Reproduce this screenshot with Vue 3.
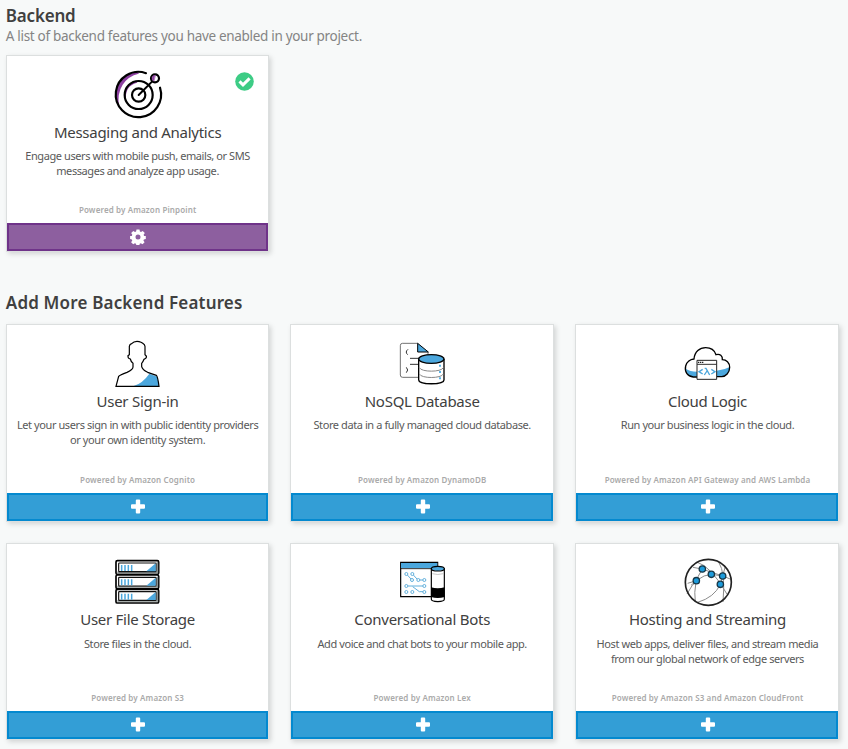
<script setup>
const enabled = [
  { icon: 'target', title: 'Messaging and Analytics', lines: ['Engage users with mobile push, emails, or SMS', 'messages and analyze app usage.'], service: 'Amazon Pinpoint' },
]
const available = [
  { icon: 'user', title: 'User Sign-in', lines: ['Let your users sign in with public identity providers', 'or your own identity system.'], service: 'Amazon Cognito' },
  { icon: 'database', title: 'NoSQL Database', lines: ['Store data in a fully managed cloud database.'], service: 'Amazon DynamoDB' },
  { icon: 'cloud', title: 'Cloud Logic', lines: ['Run your business logic in the cloud.'], service: 'Amazon API Gateway and AWS Lambda' },
  { icon: 'storage', title: 'User File Storage', lines: ['Store files in the cloud.'], service: 'Amazon S3' },
  { icon: 'bots', title: 'Conversational Bots', lines: ['Add voice and chat bots to your mobile app.'], service: 'Amazon Lex' },
  { icon: 'globe', title: 'Hosting and Streaming', lines: ['Host web apps, deliver files, and stream media', 'from our global network of edge servers'], service: 'Amazon S3 and Amazon CloudFront' },
]
const sections = [
  { key: 'on', items: enabled, active: true },
  { key: 'more', items: available, active: false },
]
</script>

<template>
  <main class="page">
    <section v-for="s in sections" :key="s.key" class="section" :class="s.key">
      <header class="head">
        <h2>{{ s.active ? 'Backend' : 'Add More Backend Features' }}</h2>
        <p v-if="s.active">A list of backend features you have enabled in your project.</p>
      </header>
      <div class="grid">
        <article v-for="f in s.items" :key="f.title" class="card" :class="{ active: s.active }">
          <svg v-if="s.active" class="check" viewBox="0 0 19 19">
            <circle cx="9.5" cy="9.5" r="9.3" fill="#3dcc85" />
            <path d="M4.5 9.4 8 12.9 14.6 6.4" fill="none" stroke="#fff" stroke-width="3" />
          </svg>
          <svg class="icon" viewBox="0 0 186 180" fill="none" stroke="#000">
            <g v-if="f.icon === 'target'" stroke-width="6.500" stroke-linecap="round">
              <path d="M95 25A68 68 0 0 0 36 127Q30 88 47 62T95 29Z" fill="#8c3fa0" stroke="none" />
              <path d="M90 51A42 42 0 0 0 57 110Q52 66 90 56Z" fill="#8c3fa0" stroke="none" />
              <path d="M117 27.500A68 68 0 1 0 159 71" />
              <circle cx="95" cy="93" r="42" />
              <circle cx="95" cy="93" r="20" />
              <path d="M95 93 135 53" stroke-width="6" />
              <circle cx="144" cy="43" r="12" fill="#fff" />
              <path d="M144 34A9 9 0 0 0 140 51Z" fill="#8c3fa0" stroke="#8c3fa0" stroke-width="2" />
            </g>
            <g v-else-if="f.icon === 'user'" stroke-width="3.600">
              <path d="M80 156Q108 147 127 119L151 128 156 156Z" fill="#4ba7dd" stroke="none" />
              <path d="M27 157 35 127Q38 123 60 115 78 107 78 99V88Q72 84 70 75 62 74 63 65L67 62V37Q68 30 74 29 80 22 90 22 103 22 112 32 115 36 114 45V62L118 66Q120 73 111 76 108 84 104 88V98Q106 107 122 115L148 124Q152 127 156 157Z" />
            </g>
            <g v-else-if="f.icon === 'database'" stroke-width="3">
              <path d="M78 28H31Q25 28 25 35V123Q25 130 32 130H82M108 54V64" stroke="#555" stroke-width="2.500" />
              <path d="M77 28 109 54H77Z" fill="#4ba7dd" />
              <path d="M48 46Q38 54 47 62M43 100Q51 108 43 116M54 73H84M54 91H82" stroke-width="2.800" stroke="#222" />
              <path d="M80 75V138C80 153 156 153 156 138V75" fill="#fff" stroke-width="4" />
              <ellipse cx="118" cy="75" rx="38" ry="13" fill="#4ba7dd" stroke-width="4" />
              <path d="M82 101C88 115 148 115 154 101M82 120C88 134 148 134 154 120" stroke="#888" />
              <path d="M144 92v6M144 111v6M144 130v6" stroke="#39a4e0" stroke-width="5" />
            </g>
            <g v-else-if="f.icon === 'cloud'">
              <path d="M26 104Q39 113 60 113V128H48Q29 126 26 104ZM158 99Q142 108 119 110V128H137Q155 124 158 99Z" fill="#4ba7dd" stroke="none" />
              <path d="M60 129H49C31 127 22 113 26 96 29 84 40 76 51 75 53 53 68 41 86 41 101 41 113 50 117 62 129 58 137 66 136 77 148 77 158 86 158 100 158 116 146 128 134 128H119" stroke-width="4" />
              <path d="M60 79H119V136H60Z" fill="#fff" stroke="#222" stroke-width="3" />
              <path d="M60 91H119" stroke="#333" stroke-width="3" />
              <path d="M63 85h16" stroke="#222" stroke-width="4" stroke-dasharray="4 2" />
              <path d="M77 106 66 113 77 120M103 106 114 113 103 120M83 103H87L98 123M90 111 82 123" stroke="#4ba7dd" stroke-width="4" />
            </g>
            <g v-else-if="f.icon === 'storage'">
              <g v-for="y in [26, 69, 112]" :key="y">
                <rect x="27" :y="y" width="128" height="41" rx="4" fill="#fff" stroke-width="5" />
                <path :d="`M151 ${y + 5}V${y + 35}H31`" stroke="#8b9290" stroke-width="5" />
                <rect x="35" :y="y + 7" width="112" height="26" rx="2" fill="#fff" stroke="#111" stroke-width="3.500" />
                <path :d="`M146 ${y + 8}V${y + 32}H118Z`" fill="#4ba7dd" stroke="none" />
                <path :d="`M44 ${y + 13}v18M54 ${y + 13}v18M64 ${y + 13}v18M74 ${y + 13}v18`" stroke="#4ba7dd" stroke-width="4.500" />
              </g>
            </g>
            <g v-else-if="f.icon === 'bots'">
              <path d="M26 31H137V134H26Z" fill="#fff" stroke-width="3.500" />
              <path d="M27 33H136V48H27Z" fill="#4ba7dd" stroke="none" />
              <path d="M26 50H137" stroke-width="2.500" />
              <g stroke="#62b0dc" stroke-width="3">
                <path d="M46 69 57 81M64 69 76 82M83 84H93M48 102H93M62 104 82 119H93" />
                <circle v-for="p in [[43, 66], [61, 66], [60, 84], [79, 84], [97, 84], [43, 102], [97, 102], [43, 120], [61, 120], [97, 120]]" :key="p.join()" :cx="p[0]" :cy="p[1]" r="4.500" fill="#fff" />
              </g>
              <path d="M118 50V142C118 151 157 151 157 142V50Z" fill="#fff" stroke-width="3.500" />
              <path d="M117 106Q137 112 158 106V135Q137 141 117 135Z" fill="#000" stroke="none" />
              <ellipse cx="137.500" cy="50" rx="19.500" ry="7" fill="#4ba7dd" stroke-width="3.500" />
              <path d="M121 65Q137 70 154 65" stroke="#aaa" stroke-width="2" />
            </g>
            <g v-else>
              <g stroke="#8b8b8b" stroke-width="3">
                <path d="M59 30Q102 42 151 128M48 46 75 51 137 72 162 82M125 30Q146 62 138 150M76 51Q47 92 55 149M30 126Q58 70 103 67M103 67 137 72M62 151Q112 136 130 97L137 72 145 43M32 94 58 86 42 100" />
              </g>
              <circle cx="94" cy="91" r="69" stroke="#222" stroke-width="5" />
              <circle v-for="p in [[76, 51], [103, 67], [137, 72], [130, 97], [58, 86]]" :key="p.join()" :cx="p[0]" :cy="p[1]" r="9.500" fill="#1d9bdb" stroke="#173747" stroke-width="4" />
            </g>
          </svg>
          <h3>{{ f.title }}</h3>
          <p class="desc"><span v-for="l in f.lines" :key="l">{{ l }}</span></p>
          <p class="powered">Powered by {{ f.service }}</p>
          <button class="bar" type="button">
            <svg v-if="s.active" class="glyph" viewBox="0 0 16 16">
              <path fill="#fff" fill-rule="evenodd" d="M6.500 0.600h3l.4 2 1.100.5 1.700-1.200 2.100 2.100-1.200 1.700.5 1.200 1.700.2v2.900l-1.900.4-.5 1.200 1.200 1.600-2.100 2.100-1.700-1.100-1.100.5-.4 1.900h-2.900l-.4-1.900-1.100-.5-1.700 1.100-2.100-2.100 1.200-1.600-.5-1.200-1.700-.4V7.100l1.700-.2.5-1.200L1.200 4 3.300 1.900 5 3.100l1.100-.5ZM8 5.600a2.500 2.500 0 1 0 0 5 2.500 2.500 0 0 0 0-5Z" />
            </svg>
            <svg v-else class="glyph" viewBox="0 0.500 16 16">
              <path fill="#fff" d="M6.800 1H9.200Q10.200 1 10.200 2V5.800H14Q15 5.800 15 6.800V9.200Q15 10.200 14 10.200H10.200V14Q10.200 15 9.200 15H6.800Q5.800 15 5.800 14V10.200H2Q1 10.200 1 9.200V6.800Q1 5.800 2 5.800H5.800V2Q5.800 1 6.800 1Z" />
            </svg>
          </button>
        </article>
      </div>
    </section>
  </main>
</template>

<style>
body { background: #f7f9f9; overflow: hidden; }
</style>

<style scoped>
* { box-sizing: border-box; }
.page { height: 749px; padding-left: 5.800px; font-family: "Noto Sans", "Open Sans", sans-serif; color: #404040; overflow: hidden; white-space: nowrap; }
h2, h3, p { margin: 0; }
.on .head { height: 55px; padding-top: 5px; }
.on { height: 252.300px; }
.more .head { height: 72.100px; padding-top: 40px; }
h2 { font-size: 17px; line-height: 22px; font-weight: 600; letter-spacing: -0.200px; }
.more h2 { letter-spacing: 0.170px; }
.head p { font-size: 13.500px; line-height: 18px; color: #848484; letter-spacing: -0.310px; }
.grid { display: grid; grid-template-columns: repeat(3, 263.600px); column-gap: 21px; row-gap: 21.200px; }
.card { position: relative; height: 197.300px; display: flex; flex-direction: column; align-items: center; background: #fff; border: 1px solid #dcdfdf; box-shadow: 2px 2px 5px rgba(0, 0, 0, .15); }
.check { position: absolute; right: 14px; top: 16px; width: 19px; height: 19px; }
.icon { width: 62px; height: 60px; margin-top: 8px; margin-left: 0.800px; flex: none; }
.card:nth-child(3n+2) .icon { margin-left: 1.200px; }
.card:nth-child(3n) .icon { margin-left: 2.400px; }
.more .card:nth-child(-n+3) .icon { margin-top: 8.800px; margin-bottom: -0.800px; }
h3 { font-size: 15px; line-height: 20px; height: 20px; font-weight: 400; margin-top: -2px; letter-spacing: -0.270px; }
.more .card:nth-child(n+4) h3 { margin-top: -2.700px; margin-bottom: 0.700px; }
.desc { margin-top: 6px; height: 46px; font-size: 11px; line-height: 15px; color: #595959; text-align: center; letter-spacing: -0.410px; }
.desc span { display: block; }
.powered { margin-top: 10.300px; font-size: 8px; line-height: 12px; font-weight: 600; color: #aaa; letter-spacing: 0.130px; }
.card:nth-child(3n) h3, .card:nth-child(3n) .desc, .card:nth-child(3n) .powered { padding-left: 1.400px; }
.bar { align-self: stretch; margin: auto 0 0; height: 28px; padding: 0; display: flex; align-items: center; justify-content: center; background: #339ed6; border: 2px solid #0489cf; }
.active .bar { background: #8d5f9f; border-color: #6f3389; }
.glyph { width: 16px; height: 16px; display: block; }
.card:nth-child(3n+2) .glyph { margin-left: 1px; }
.card:nth-child(3n) .glyph { margin-left: 1.600px; }
</style>
